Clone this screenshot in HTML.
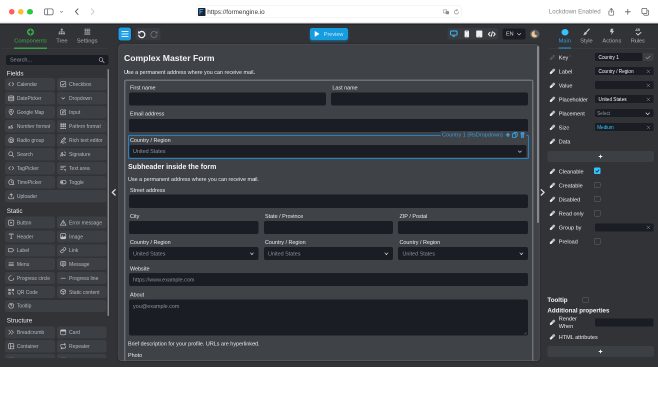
<!DOCTYPE html>
<html><head><meta charset="utf-8"><title>FormEngine</title>
<style>
html,body{margin:0;padding:0;background:#fff;}
body{width:658px;height:400px;overflow:hidden;position:relative;font-family:"Liberation Sans",sans-serif;}
#root{position:absolute;left:0;top:0;width:1316px;height:800px;overflow:hidden;will-change:transform;transform:scale(0.5);transform-origin:0 0;}
#root div,#root svg,#txt div{position:absolute;box-sizing:border-box;}
#txt{position:absolute;left:0;top:0;width:658px;height:400px;overflow:hidden;will-change:transform;}
.t{white-space:nowrap;}
svg{overflow:visible;fill:none;}
</style></head><body><div id="root">
<div style="left:0px;top:0px;width:1316px;height:48px;background:#fff;"></div>
<div style="left:0px;top:43px;width:1316px;height:5px;background:linear-gradient(to bottom,rgba(0,0,0,0),rgba(0,0,0,0.2));"></div>
<div style="left:18px;top:18px;width:11px;height:11px;border-radius:50%;background:#fe5f57;"></div>
<div style="left:36px;top:18px;width:11px;height:11px;border-radius:50%;background:#febc2e;"></div>
<div style="left:54px;top:18px;width:12px;height:11px;border-radius:50%;background:#28c840;"></div>
<svg style="left:88.4px;top:16.6px;width:19px;height:13.4px;" viewBox="0 0 9.5 6.7"><rect x="0.4" y="0.4" width="8.7" height="5.9" rx="1.4" stroke="#6e6e73" stroke-width="0.8"/><line x1="3.5" y1="0.4" x2="3.5" y2="6.3" stroke="#6e6e73" stroke-width="0.8"/></svg>
<svg style="left:119.6px;top:22px;width:6px;height:3.6px;" viewBox="0 0 3 1.8"><path d="M0.2 0.2 L1.5 1.5 L2.8 0.2" stroke="#8e8e93" stroke-width="0.7" stroke-linecap="round" stroke-linejoin="round"/></svg>
<svg style="left:150px;top:17px;width:6.8px;height:12.4px;" viewBox="0 0 3.4 6.2"><path d="M3 0.3 L0.4 3.1 L3 5.9" stroke="#545458" stroke-width="0.9" stroke-linecap="round" stroke-linejoin="round"/></svg>
<svg style="left:182.2px;top:17px;width:6.8px;height:12.4px;" viewBox="0 0 3.4 6.2"><path d="M0.4 0.3 L3 3.1 L0.4 5.9" stroke="#c7c7cb" stroke-width="0.9" stroke-linecap="round" stroke-linejoin="round"/></svg>
<div style="left:392px;top:10px;width:531px;height:26px;border-radius:7px;border:1.2px solid #ececee;background:#fff;"></div>
<div style="left:396px;top:16px;width:15px;height:16px;background:#1c2230;border-radius:1.6px;"></div>
<svg style="left:399.3px;top:18.4px;width:8px;height:10.8px;" viewBox="0 0 4 5.4"><path d="M0.4 5.2 V0.5 H3.7 M0.4 2.7 H3" stroke="#3aa0f0" stroke-width="1"/></svg>
<div class="t" style="left:414.4px;top:15.72px;height:17.78px;line-height:17.78px;font-size:12.7px;color:#38383a;font-weight:400;">https://formengine.io</div>
<svg style="left:886.2px;top:18.6px;width:12.8px;height:10px;" viewBox="0 0 6.4 5"><rect x="0.3" y="0.3" width="3.6" height="3.2" rx="0.8" stroke="#8e8e93" stroke-width="0.6"/><rect x="2.6" y="1.6" width="3.5" height="3.1" rx="0.8" fill="#8e8e93"/></svg>
<svg style="left:907.6px;top:18.4px;width:10px;height:10.8px;" viewBox="0 0 5 5.4"><path d="M4.4 3.1 A2 2 0 1 1 2.5 1.1 H3.3" stroke="#8e8e93" stroke-width="0.65" stroke-linecap="round"/><path d="M2.7 0.2 L3.6 1.1 L2.7 2" stroke="#8e8e93" stroke-width="0.6" stroke-linecap="round" stroke-linejoin="round"/></svg>
<div class="t" style="left:1097.8px;top:15.44px;height:17.14px;line-height:17.14px;font-size:12.24px;color:#8a8a8e;font-weight:400;">Lockdown Enabled</div>
<svg style="left:1217px;top:15.6px;width:11.2px;height:15.2px;" viewBox="0 0 5.6 7.6"><path d="M1.6 2.9 H1.2 Q0.4 2.9 0.4 3.7 V6.4 Q0.4 7.2 1.2 7.2 H4.4 Q5.2 7.2 5.2 6.4 V3.7 Q5.2 2.9 4.4 2.9 H4" stroke="#606065" stroke-width="0.7" stroke-linecap="round"/><path d="M2.8 4.6 V0.5 M1.6 1.6 L2.8 0.4 L4 1.6" stroke="#606065" stroke-width="0.7" stroke-linecap="round" stroke-linejoin="round"/></svg>
<svg style="left:1249.8px;top:18px;width:11.2px;height:11.2px;" viewBox="0 0 5.6 5.6"><path d="M2.8 0.3 V5.3 M0.3 2.8 H5.3" stroke="#606065" stroke-width="0.8" stroke-linecap="round"/></svg>
<svg style="left:1282.8px;top:16px;width:15.2px;height:15.2px;" viewBox="0 0 7.6 7.6"><rect x="0.4" y="0.4" width="5" height="5.2" rx="1.1" stroke="#606065" stroke-width="0.75"/><path d="M6.3 2.2 Q7.2 2.3 7.2 3.3 V6 Q7.2 7.2 6 7.2 H3.3 Q2.3 7.2 2.2 6.4" stroke="#606065" stroke-width="0.75" stroke-linecap="round"/></svg>
<div style="left:0px;top:47px;width:1316px;height:687px;background:#313337;"></div>
<div style="left:0px;top:47px;width:1316px;height:2px;background:#1b1c1f;"></div>
<svg style="left:54.2px;top:56.8px;width:14px;height:14px;" viewBox="0 0 16 16"><circle cx="8" cy="8" r="8" fill="#33b145"/><path d="M8 3.8 V12.2 M4.6 8 H11.4" stroke="#313337" stroke-width="3.2" stroke-linecap="round"/></svg>
<div class="t" style="left:28.4px;top:72.54px;height:16.12px;line-height:16.12px;font-size:11.52px;color:#3fab49;font-weight:400;">Components</div>
<svg style="left:117.4px;top:57px;width:13.2px;height:12.4px;" viewBox="0 0 16 15"><rect x="5.6" y="0.5" width="4.8" height="4.2" fill="#a7abb2"/><rect x="0.4" y="9.8" width="4.4" height="4.4" fill="#a7abb2"/><rect x="5.8" y="9.8" width="4.4" height="4.4" fill="#a7abb2"/><rect x="11.2" y="9.8" width="4.4" height="4.4" fill="#a7abb2"/><path d="M8 4.5 V9.8 M2.6 9.8 V7.2 H13.4 V9.8" stroke="#a7abb2" stroke-width="1.3"/></svg>
<div class="t" style="left:112.6px;top:72.54px;height:16.12px;line-height:16.12px;font-size:11.52px;color:#a7abb2;font-weight:400;letter-spacing:-0.24px;">Tree</div>
<svg style="left:167.8px;top:56.8px;width:13.2px;height:12.8px;" viewBox="0 0 16 16"><path d="M0.5 1.5 H15.5 M0.5 5.2 H15.5 M0.5 9 H15.5 M0.5 14.4 H15.5" stroke="#a7abb2" stroke-width="1.6"/><path d="M3.5 1.5 V9 M8 1.5 V9 M12.5 1.5 V9" stroke="#a7abb2" stroke-width="1.3"/><rect x="1" y="10.6" width="14" height="2.6" fill="#a7abb2" opacity="0.7"/></svg>
<div class="t" style="left:153.4px;top:72.54px;height:16.12px;line-height:16.12px;font-size:11.52px;color:#a7abb2;font-weight:400;">Settings</div>
<div style="left:5px;top:97px;width:212px;height:1px;background:#3f4247;"></div>
<div style="left:28px;top:95px;width:66px;height:3px;background:#3da046;"></div>
<div style="left:12px;top:110px;width:205px;height:20px;background:#1a1d24;border-radius:4.4px;"></div>
<div class="t" style="left:20px;top:111.9px;height:15.4px;line-height:15.4px;font-size:11px;color:#9499a1;font-weight:400;">Search...</div>
<svg style="left:197px;top:114.4px;width:12px;height:12px;" viewBox="0 0 16 16"><circle cx="6.6" cy="6.6" r="4.9" stroke="#cdd0d4" stroke-width="1.5"/><path d="M10.4 10.4 L15 15" stroke="#cdd0d4" stroke-width="1.7" stroke-linecap="round"/></svg>
<div style="left:215px;top:138px;width:3px;height:494px;background:#85888d;border-radius:1.6px;"></div>
<div style="left:0;top:132px;width:220px;height:584px;overflow:hidden;"><div style="left:0;top:-132px;width:220px;height:800px;">
<div class="t" style="left:13.5px;top:138.98px;height:17.64px;line-height:17.64px;font-size:12.6px;color:#e9ebf0;font-weight:400;">Fields</div>
<div style="left:10px;top:156px;width:100px;height:25px;background:#3c3f43;border-radius:4.8px;"></div>
<svg style="left:15.6px;top:162px;width:12.8px;height:12.8px;" viewBox="0 0 16 16"><path d="M5.5 4 L1.5 8 L5.5 12 M10.5 4 L14.5 8 L10.5 12" stroke="#c3c6ca" stroke-width="1.6" stroke-linecap="round" stroke-linejoin="round"/></svg>
<div class="t" style="left:33.7px;top:162.36px;height:14.08px;line-height:14.08px;font-size:10.06px;color:#b6b9be;font-weight:400;">Calendar</div>
<div style="left:114px;top:156px;width:99px;height:25px;background:#3c3f43;border-radius:4.8px;"></div>
<svg style="left:120px;top:162px;width:12.8px;height:12.8px;" viewBox="0 0 16 16"><rect x="1.5" y="1.5" width="13" height="13" rx="2.5" stroke="#c3c6ca" stroke-width="1.6" stroke-linecap="round" stroke-linejoin="round"/><path d="M4.8 8.4 L7 10.6 L11.4 5.6" stroke="#c3c6ca" stroke-width="1.6" stroke-linecap="round" stroke-linejoin="round"/></svg>
<div class="t" style="left:138.1px;top:162.36px;height:14.08px;line-height:14.08px;font-size:10.06px;color:#b6b9be;font-weight:400;">Checkbox</div>
<div style="left:10px;top:184px;width:100px;height:25px;background:#3c3f43;border-radius:4.8px;"></div>
<svg style="left:15.6px;top:190px;width:12.8px;height:12.8px;" viewBox="0 0 16 16"><rect x="1.5" y="2.5" width="13" height="12" rx="2.5" stroke="#c3c6ca" stroke-width="1.6" stroke-linecap="round" stroke-linejoin="round"/><path d="M1.5 6.5 H14.5 M1.5 10 H14.5" stroke="#c3c6ca" stroke-width="1.6" stroke-linecap="round" stroke-linejoin="round"/></svg>
<div class="t" style="left:33.7px;top:190.36px;height:14.08px;line-height:14.08px;font-size:10.06px;color:#b6b9be;font-weight:400;">DatePicker</div>
<div style="left:114px;top:184px;width:99px;height:25px;background:#3c3f43;border-radius:4.8px;"></div>
<svg style="left:120px;top:190px;width:12.8px;height:12.8px;" viewBox="0 0 16 16"><path d="M4.5 6.5 L8 10 L11.5 6.5" stroke="#c3c6ca" stroke-width="1.6" stroke-linecap="round" stroke-linejoin="round"/></svg>
<div class="t" style="left:138.1px;top:190.36px;height:14.08px;line-height:14.08px;font-size:10.06px;color:#b6b9be;font-weight:400;">Dropdown</div>
<div style="left:10px;top:212px;width:100px;height:25px;background:#3c3f43;border-radius:4.8px;"></div>
<svg style="left:15.6px;top:218px;width:12.8px;height:12.8px;" viewBox="0 0 16 16"><path d="M8 15 C4 10.5 2.5 8.5 2.5 6.3 A5.5 5.5 0 0 1 13.5 6.3 C13.5 8.5 12 10.5 8 15 Z" stroke="#c3c6ca" stroke-width="1.6" stroke-linecap="round" stroke-linejoin="round"/><circle cx="8" cy="6.3" r="1.8" stroke="#c3c6ca" stroke-width="1.6" stroke-linecap="round" stroke-linejoin="round"/></svg>
<div class="t" style="left:33.7px;top:218.36px;height:14.08px;line-height:14.08px;font-size:10.06px;color:#b6b9be;font-weight:400;">Google Map</div>
<div style="left:114px;top:212px;width:99px;height:25px;background:#3c3f43;border-radius:4.8px;"></div>
<svg style="left:120px;top:218px;width:12.8px;height:12.8px;" viewBox="0 0 16 16"><path d="M8 2 H4 Q1.5 2 1.5 4.5 V12 Q1.5 14.5 4 14.5 H11.5 Q14 14.5 14 12 V8.5" stroke="#c3c6ca" stroke-width="1.6" stroke-linecap="round" stroke-linejoin="round"/><path d="M12.2 1.4 L14.6 3.8 L8.2 10.2 L5.4 10.6 L5.8 7.8 Z" stroke="#c3c6ca" stroke-width="1.6" stroke-linecap="round" stroke-linejoin="round"/></svg>
<div class="t" style="left:138.1px;top:218.36px;height:14.08px;line-height:14.08px;font-size:10.06px;color:#b6b9be;font-weight:400;">Input</div>
<div style="left:10px;top:240px;width:100px;height:25px;background:#3c3f43;border-radius:4.8px;"></div>
<svg style="left:15.6px;top:246px;width:12.8px;height:12.8px;" viewBox="0 0 16 16"><text x="0" y="13.5" font-size="11.5" font-weight="700" font-family="Liberation Sans" fill="#c3c6ca">a5</text></svg>
<div class="t" style="left:33.7px;top:246.36px;height:14.08px;line-height:14.08px;font-size:10.06px;color:#b6b9be;font-weight:400;">Number format</div>
<div style="left:114px;top:240px;width:99px;height:25px;background:#3c3f43;border-radius:4.8px;"></div>
<svg style="left:120px;top:246px;width:12.8px;height:12.8px;" viewBox="0 0 16 16"><rect x="1" y="1" width="3.8" height="3.8" fill="#c3c6ca"/><rect x="1" y="6" width="3.8" height="3.8" fill="#c3c6ca"/><rect x="1" y="11" width="3.8" height="3.8" fill="#c3c6ca"/><rect x="6" y="1" width="3.8" height="3.8" fill="#c3c6ca"/><rect x="6" y="6" width="3.8" height="3.8" fill="#c3c6ca"/><rect x="6" y="11" width="3.8" height="3.8" fill="#c3c6ca"/><rect x="11" y="1" width="3.8" height="3.8" fill="#c3c6ca"/><rect x="11" y="6" width="3.8" height="3.8" fill="#c3c6ca"/><rect x="11" y="11" width="3.8" height="3.8" fill="#c3c6ca"/></svg>
<div class="t" style="left:138.1px;top:246.36px;height:14.08px;line-height:14.08px;font-size:10.06px;color:#b6b9be;font-weight:400;">Pattern format</div>
<div style="left:10px;top:268px;width:100px;height:25px;background:#3c3f43;border-radius:4.8px;"></div>
<svg style="left:15.6px;top:274px;width:12.8px;height:12.8px;" viewBox="0 0 16 16"><circle cx="8" cy="8" r="6.3" stroke="#c3c6ca" stroke-width="1.6" stroke-linecap="round" stroke-linejoin="round"/><circle cx="8" cy="8" r="2.8" stroke="#c3c6ca" stroke-width="1.6" stroke-linecap="round" stroke-linejoin="round"/></svg>
<div class="t" style="left:33.7px;top:274.36px;height:14.08px;line-height:14.08px;font-size:10.06px;color:#b6b9be;font-weight:400;">Radio group</div>
<div style="left:114px;top:268px;width:99px;height:25px;background:#3c3f43;border-radius:4.8px;"></div>
<svg style="left:120px;top:274px;width:12.8px;height:12.8px;" viewBox="0 0 16 16"><path d="M11 1.5 L14 4.5 L7 11.5 L3.8 12 L4.3 8.8 Z" stroke="#c3c6ca" stroke-width="1.6" stroke-linecap="round" stroke-linejoin="round"/><path d="M1.5 14.8 Q4 13 6 14.6 T10.5 14.4" stroke="#c3c6ca" stroke-width="1.6" stroke-linecap="round" stroke-linejoin="round"/><path d="M12 12 L14.5 14.8" stroke="#c3c6ca" stroke-width="1.6" stroke-linecap="round" stroke-linejoin="round"/></svg>
<div class="t" style="left:138.1px;top:274.36px;height:14.08px;line-height:14.08px;font-size:10.06px;color:#b6b9be;font-weight:400;">Rich text editor</div>
<div style="left:10px;top:296px;width:100px;height:25px;background:#3c3f43;border-radius:4.8px;"></div>
<svg style="left:15.6px;top:302px;width:12.8px;height:12.8px;" viewBox="0 0 16 16"><circle cx="6.8" cy="6.8" r="4.9" stroke="#c3c6ca" stroke-width="1.6" stroke-linecap="round" stroke-linejoin="round"/><path d="M10.6 10.6 L14.8 14.8" stroke="#c3c6ca" stroke-width="1.6" stroke-linecap="round" stroke-linejoin="round"/></svg>
<div class="t" style="left:33.7px;top:302.36px;height:14.08px;line-height:14.08px;font-size:10.06px;color:#b6b9be;font-weight:400;">Search</div>
<div style="left:114px;top:296px;width:99px;height:25px;background:#3c3f43;border-radius:4.8px;"></div>
<svg style="left:120px;top:302px;width:12.8px;height:12.8px;" viewBox="0 0 16 16"><path d="M1.5 13 C3 6 5.5 2 6.5 4 C7.5 6.5 3 12.5 5.5 12.5 C7.5 12.5 8.5 8 10 8.5 C11 9 10 11.5 11.5 11.5 L14.5 9.5" stroke="#c3c6ca" stroke-width="1.6" stroke-linecap="round" stroke-linejoin="round"/><path d="M11 2 L14 5" stroke="#c3c6ca" stroke-width="1.6" stroke-linecap="round" stroke-linejoin="round"/></svg>
<div class="t" style="left:138.1px;top:302.36px;height:14.08px;line-height:14.08px;font-size:10.06px;color:#b6b9be;font-weight:400;">Signature</div>
<div style="left:10px;top:324px;width:100px;height:25px;background:#3c3f43;border-radius:4.8px;"></div>
<svg style="left:15.6px;top:330px;width:12.8px;height:12.8px;" viewBox="0 0 16 16"><path d="M5.5 4 L1.5 8 L5.5 12 M10.5 4 L14.5 8 L10.5 12" stroke="#c3c6ca" stroke-width="1.6" stroke-linecap="round" stroke-linejoin="round"/></svg>
<div class="t" style="left:33.7px;top:330.36px;height:14.08px;line-height:14.08px;font-size:10.06px;color:#b6b9be;font-weight:400;">TagPicker</div>
<div style="left:114px;top:324px;width:99px;height:25px;background:#3c3f43;border-radius:4.8px;"></div>
<svg style="left:120px;top:330px;width:12.8px;height:12.8px;" viewBox="0 0 16 16"><path d="M1.5 3 H14.5 M1.5 7 H10 M1.5 11 H6.5" stroke="#c3c6ca" stroke-width="1.6" stroke-linecap="round" stroke-linejoin="round"/><path d="M10.5 11.5 H14.5 M12.5 14.5 H14.5" stroke="#c3c6ca" stroke-width="1.6" stroke-linecap="round" stroke-linejoin="round"/></svg>
<div class="t" style="left:138.1px;top:330.36px;height:14.08px;line-height:14.08px;font-size:10.06px;color:#b6b9be;font-weight:400;">Text area</div>
<div style="left:10px;top:352px;width:100px;height:25px;background:#3c3f43;border-radius:4.8px;"></div>
<svg style="left:15.6px;top:358px;width:12.8px;height:12.8px;" viewBox="0 0 16 16"><circle cx="8" cy="8" r="6.3" stroke="#c3c6ca" stroke-width="1.6" stroke-linecap="round" stroke-linejoin="round"/><path d="M8 4.2 V8 H11.2" stroke="#c3c6ca" stroke-width="1.6" stroke-linecap="round" stroke-linejoin="round"/><path d="M11.5 12.5 L15 14.5" stroke="#c3c6ca" stroke-width="1.6" stroke-linecap="round" stroke-linejoin="round"/></svg>
<div class="t" style="left:33.7px;top:358.36px;height:14.08px;line-height:14.08px;font-size:10.06px;color:#b6b9be;font-weight:400;">TimePicker</div>
<div style="left:114px;top:352px;width:99px;height:25px;background:#3c3f43;border-radius:4.8px;"></div>
<svg style="left:120px;top:358px;width:12.8px;height:12.8px;" viewBox="0 0 16 16"><rect x="0.8" y="3.8" width="14.4" height="8.4" rx="4.2" stroke="#c3c6ca" stroke-width="1.6" stroke-linecap="round" stroke-linejoin="round"/><circle cx="5.2" cy="8" r="2.6" fill="#c3c6ca"/></svg>
<div class="t" style="left:138.1px;top:358.36px;height:14.08px;line-height:14.08px;font-size:10.06px;color:#b6b9be;font-weight:400;">Toggle</div>
<div style="left:10px;top:380px;width:203px;height:25px;background:#3c3f43;border-radius:4.8px;"></div>
<svg style="left:15.6px;top:386px;width:12.8px;height:12.8px;" viewBox="0 0 16 16"><path d="M1.5 9.5 V12 Q1.5 14.5 4 14.5 H12 Q14.5 14.5 14.5 12 V9.5" stroke="#c3c6ca" stroke-width="1.6" stroke-linecap="round" stroke-linejoin="round"/><path d="M8 10.5 V2 M4.8 5 L8 1.8 L11.2 5" stroke="#c3c6ca" stroke-width="1.6" stroke-linecap="round" stroke-linejoin="round"/></svg>
<div class="t" style="left:33.7px;top:386.36px;height:14.08px;line-height:14.08px;font-size:10.06px;color:#b6b9be;font-weight:400;">Uploader</div>
<div class="t" style="left:13.5px;top:413.58px;height:17.64px;line-height:17.64px;font-size:12.6px;color:#e9ebf0;font-weight:400;">Static</div>
<div style="left:10px;top:433px;width:100px;height:24px;background:#3c3f43;border-radius:4.8px;"></div>
<svg style="left:15.6px;top:438.5px;width:12.8px;height:12.8px;" viewBox="0 0 16 16"><rect x="1.5" y="1.5" width="13" height="13" rx="3" stroke="#c3c6ca" stroke-width="1.6" stroke-linecap="round" stroke-linejoin="round"/><path d="M6.2 5 L10.8 8 L6.2 11 Z" fill="#c3c6ca"/></svg>
<div class="t" style="left:33.7px;top:438.86px;height:14.08px;line-height:14.08px;font-size:10.06px;color:#b6b9be;font-weight:400;">Button</div>
<div style="left:114px;top:433px;width:99px;height:24px;background:#3c3f43;border-radius:4.8px;"></div>
<svg style="left:120px;top:438.5px;width:12.8px;height:12.8px;" viewBox="0 0 16 16"><path d="M8 1.8 L15 14.2 H1 Z" stroke="#c3c6ca" stroke-width="1.6" stroke-linecap="round" stroke-linejoin="round"/><path d="M8 6.5 V10" stroke="#c3c6ca" stroke-width="1.6" stroke-linecap="round" stroke-linejoin="round"/><circle cx="8" cy="12" r="0.6" fill="#c3c6ca"/></svg>
<div class="t" style="left:138.1px;top:438.86px;height:14.08px;line-height:14.08px;font-size:10.06px;color:#b6b9be;font-weight:400;">Error message</div>
<div style="left:10px;top:461px;width:100px;height:24px;background:#3c3f43;border-radius:4.8px;"></div>
<svg style="left:15.6px;top:466.26px;width:12.8px;height:12.8px;" viewBox="0 0 16 16"><path d="M3 3.8 V2.5 H13 V3.8 M8 2.5 V13.5 M6 13.5 H10" stroke="#c3c6ca" stroke-width="1.6" stroke-linecap="round" stroke-linejoin="round"/></svg>
<div class="t" style="left:33.7px;top:466.62px;height:14.08px;line-height:14.08px;font-size:10.06px;color:#b6b9be;font-weight:400;">Header</div>
<div style="left:114px;top:461px;width:99px;height:24px;background:#3c3f43;border-radius:4.8px;"></div>
<svg style="left:120px;top:466.26px;width:12.8px;height:12.8px;" viewBox="0 0 16 16"><rect x="1.5" y="1.5" width="13" height="13" rx="2.2" stroke="#c3c6ca" stroke-width="1.6" stroke-linecap="round" stroke-linejoin="round"/><circle cx="5.6" cy="5.6" r="1.3" fill="#c3c6ca"/><path d="M1.8 12 L5.8 8.8 L8.4 10.8 L11 8.4 L14.2 11.4" stroke="#c3c6ca" stroke-width="1.6" stroke-linecap="round" stroke-linejoin="round"/><path d="M2.2 14 H13.8 V11.8 L11 9 L8.4 11.2 L5.8 9.4 L2.2 12.4 Z" fill="#c3c6ca"/></svg>
<div class="t" style="left:138.1px;top:466.62px;height:14.08px;line-height:14.08px;font-size:10.06px;color:#b6b9be;font-weight:400;">Image</div>
<div style="left:10px;top:489px;width:100px;height:24px;background:#3c3f43;border-radius:4.8px;"></div>
<svg style="left:15.6px;top:494.02px;width:12.8px;height:12.8px;" viewBox="0 0 16 16"><path d="M1.5 4 H10.5 L14.5 8 L10.5 12 H1.5 Z" stroke="#c3c6ca" stroke-width="1.6" stroke-linecap="round" stroke-linejoin="round"/></svg>
<div class="t" style="left:33.7px;top:494.38px;height:14.08px;line-height:14.08px;font-size:10.06px;color:#b6b9be;font-weight:400;">Label</div>
<div style="left:114px;top:489px;width:99px;height:24px;background:#3c3f43;border-radius:4.8px;"></div>
<svg style="left:120px;top:494.02px;width:12.8px;height:12.8px;" viewBox="0 0 16 16"><path d="M7 9 A3 3 0 0 0 11.3 9 L13.6 6.7 A3 3 0 0 0 9.3 2.4 L8.2 3.5" stroke="#c3c6ca" stroke-width="1.6" stroke-linecap="round" stroke-linejoin="round"/><path d="M9 7 A3 3 0 0 0 4.7 7 L2.4 9.3 A3 3 0 0 0 6.7 13.6 L7.8 12.5" stroke="#c3c6ca" stroke-width="1.6" stroke-linecap="round" stroke-linejoin="round"/></svg>
<div class="t" style="left:138.1px;top:494.38px;height:14.08px;line-height:14.08px;font-size:10.06px;color:#b6b9be;font-weight:400;">Link</div>
<div style="left:10px;top:516px;width:100px;height:24px;background:#3c3f43;border-radius:4.8px;"></div>
<svg style="left:15.6px;top:521.78px;width:12.8px;height:12.8px;" viewBox="0 0 16 16"><path d="M2 4.5 H14 M2 8 H14 M2 11.5 H14" stroke="#c3c6ca" stroke-width="1.6" stroke-linecap="round" stroke-linejoin="round"/></svg>
<div class="t" style="left:33.7px;top:522.14px;height:14.08px;line-height:14.08px;font-size:10.06px;color:#b6b9be;font-weight:400;">Menu</div>
<div style="left:114px;top:516px;width:99px;height:24px;background:#3c3f43;border-radius:4.8px;"></div>
<svg style="left:120px;top:521.78px;width:12.8px;height:12.8px;" viewBox="0 0 16 16"><path d="M3.5 1.8 H12.5 Q14.5 1.8 14.5 3.8 V9.4 Q14.5 11.4 12.5 11.4 H9.5 L8 14 L6.5 11.4 H3.5 Q1.5 11.4 1.5 9.4 V3.8 Q1.5 1.8 3.5 1.8 Z" stroke="#c3c6ca" stroke-width="1.6" stroke-linecap="round" stroke-linejoin="round"/><path d="M4.6 5 H11.4 M4.6 8 H11.4" stroke="#c3c6ca" stroke-width="1.6" stroke-linecap="round" stroke-linejoin="round"/></svg>
<div class="t" style="left:138.1px;top:522.14px;height:14.08px;line-height:14.08px;font-size:10.06px;color:#b6b9be;font-weight:400;">Message</div>
<div style="left:10px;top:544px;width:100px;height:24px;background:#3c3f43;border-radius:4.8px;"></div>
<svg style="left:15.6px;top:549.54px;width:12.8px;height:12.8px;" viewBox="0 0 16 16"><path d="M8 1.8 A6.2 6.2 0 1 0 14.2 8" stroke="#c3c6ca" stroke-width="1.6" stroke-linecap="round" stroke-linejoin="round"/></svg>
<div class="t" style="left:33.7px;top:549.9px;height:14.08px;line-height:14.08px;font-size:10.06px;color:#b6b9be;font-weight:400;">Progress circle</div>
<div style="left:114px;top:544px;width:99px;height:24px;background:#3c3f43;border-radius:4.8px;"></div>
<svg style="left:120px;top:549.54px;width:12.8px;height:12.8px;" viewBox="0 0 16 16"><path d="M2.5 8 H13.5" stroke="#c3c6ca" stroke-width="1.6" stroke-linecap="round" stroke-linejoin="round"/></svg>
<div class="t" style="left:138.1px;top:549.9px;height:14.08px;line-height:14.08px;font-size:10.06px;color:#b6b9be;font-weight:400;">Progress line</div>
<div style="left:10px;top:572px;width:100px;height:24px;background:#3c3f43;border-radius:4.8px;"></div>
<svg style="left:15.6px;top:577.3px;width:12.8px;height:12.8px;" viewBox="0 0 16 16"><rect x="1" y="1" width="5.5" height="5.5" fill="#c3c6ca"/><rect x="9.5" y="1" width="5.5" height="5.5" fill="#c3c6ca"/><rect x="1" y="9.5" width="5.5" height="5.5" fill="#c3c6ca"/><rect x="9.5" y="9.5" width="2.4" height="2.4" fill="#c3c6ca"/><rect x="12.6" y="12.6" width="2.4" height="2.4" fill="#c3c6ca"/><rect x="2.8" y="2.8" width="1.9" height="1.9" fill="#3c3f43"/><rect x="11.3" y="2.8" width="1.9" height="1.9" fill="#3c3f43"/><rect x="2.8" y="11.3" width="1.9" height="1.9" fill="#3c3f43"/></svg>
<div class="t" style="left:33.7px;top:577.66px;height:14.08px;line-height:14.08px;font-size:10.06px;color:#b6b9be;font-weight:400;">QR Code</div>
<div style="left:114px;top:572px;width:99px;height:24px;background:#3c3f43;border-radius:4.8px;"></div>
<svg style="left:120px;top:577.3px;width:12.8px;height:12.8px;" viewBox="0 0 16 16"><path d="M8 1.5 L14 4.8 V11.2 L8 14.5 L2 11.2 V4.8 Z" stroke="#c3c6ca" stroke-width="1.6" stroke-linecap="round" stroke-linejoin="round"/><path d="M2.2 5 L8 8.2 L13.8 5 M8 8.2 V14.3" stroke="#c3c6ca" stroke-width="1.6" stroke-linecap="round" stroke-linejoin="round"/></svg>
<div class="t" style="left:138.1px;top:577.66px;height:14.08px;line-height:14.08px;font-size:10.06px;color:#b6b9be;font-weight:400;">Static content</div>
<div style="left:10px;top:600px;width:203px;height:24px;background:#3c3f43;border-radius:4.8px;"></div>
<svg style="left:15.6px;top:605.06px;width:12.8px;height:12.8px;" viewBox="0 0 16 16"><circle cx="8" cy="8" r="6.3" stroke="#c3c6ca" stroke-width="1.6" stroke-linecap="round" stroke-linejoin="round"/><path d="M6 6.3 Q6 4.4 8 4.4 Q10 4.4 10 6.2 Q10 7.4 8 8.2 V9" stroke="#c3c6ca" stroke-width="1.6" stroke-linecap="round" stroke-linejoin="round"/><circle cx="8" cy="11.4" r="0.6" fill="#c3c6ca"/></svg>
<div class="t" style="left:33.7px;top:605.42px;height:14.08px;line-height:14.08px;font-size:10.06px;color:#b6b9be;font-weight:400;">Tooltip</div>
<div class="t" style="left:13.5px;top:633.38px;height:17.64px;line-height:17.64px;font-size:12.6px;color:#e9ebf0;font-weight:400;">Structure</div>
<div style="left:10px;top:653px;width:100px;height:24px;background:#3c3f43;border-radius:4.8px;"></div>
<svg style="left:15.6px;top:658.1px;width:12.8px;height:12.8px;" viewBox="0 0 16 16"><path d="M2 3 L7 8 L2 13 M8.5 3 L13.5 8 L8.5 13" stroke="#c3c6ca" stroke-width="1.6" stroke-linecap="round" stroke-linejoin="round"/></svg>
<div class="t" style="left:33.7px;top:658.46px;height:14.08px;line-height:14.08px;font-size:10.06px;color:#b6b9be;font-weight:400;">Breadcrumb</div>
<div style="left:114px;top:653px;width:99px;height:24px;background:#3c3f43;border-radius:4.8px;"></div>
<svg style="left:120px;top:658.1px;width:12.8px;height:12.8px;" viewBox="0 0 16 16"><rect x="1.5" y="2" width="13" height="12.5" rx="2.2" stroke="#c3c6ca" stroke-width="1.6" stroke-linecap="round" stroke-linejoin="round"/><path d="M1.5 5.4 H14.5" stroke="#c3c6ca" stroke-width="1.6" stroke-linecap="round" stroke-linejoin="round"/><rect x="1.5" y="2" width="13" height="3.4" fill="#c3c6ca"/></svg>
<div class="t" style="left:138.1px;top:658.46px;height:14.08px;line-height:14.08px;font-size:10.06px;color:#b6b9be;font-weight:400;">Card</div>
<div style="left:10px;top:680px;width:100px;height:25px;background:#3c3f43;border-radius:4.8px;"></div>
<svg style="left:15.6px;top:685.9px;width:12.8px;height:12.8px;" viewBox="0 0 16 16"><rect x="1.5" y="1.5" width="13" height="13" rx="2.4" stroke="#c3c6ca" stroke-width="1.6" stroke-linecap="round" stroke-linejoin="round"/><path d="M6.2 1.5 V14.5 M6.2 8 H14.5" stroke="#c3c6ca" stroke-width="1.6" stroke-linecap="round" stroke-linejoin="round"/></svg>
<div class="t" style="left:33.7px;top:686.26px;height:14.08px;line-height:14.08px;font-size:10.06px;color:#b6b9be;font-weight:400;">Container</div>
<div style="left:114px;top:680px;width:99px;height:25px;background:#3c3f43;border-radius:4.8px;"></div>
<svg style="left:120px;top:685.9px;width:12.8px;height:12.8px;" viewBox="0 0 16 16"><path d="M11 1 L13.5 3.2 L11 5.4 M13 3.2 H4.5 Q2 3.2 2 5.7 V8.5" stroke="#c3c6ca" stroke-width="1.6" stroke-linecap="round" stroke-linejoin="round"/><path d="M5 15 L2.5 12.8 L5 10.6 M3 12.8 H11.5 Q14 12.8 14 10.3 V7.5" stroke="#c3c6ca" stroke-width="1.6" stroke-linecap="round" stroke-linejoin="round"/></svg>
<div class="t" style="left:138.1px;top:686.26px;height:14.08px;line-height:14.08px;font-size:10.06px;color:#b6b9be;font-weight:400;">Repeater</div>
<div style="left:10px;top:708px;width:100px;height:24px;background:#3c3f43;border-radius:4.8px;"></div>
<svg style="left:15.6px;top:713.7px;width:12.8px;height:12.8px;" viewBox="0 0 16 16"><path d="M2 3 H14 M2 8 H14" stroke="#c3c6ca" stroke-width="1.6" stroke-linecap="round" stroke-linejoin="round"/></svg>
<div class="t" style="left:33.7px;top:714.06px;height:14.08px;line-height:14.08px;font-size:10.06px;color:#b6b9be;font-weight:400;">Slot</div>
<div style="left:114px;top:708px;width:99px;height:24px;background:#3c3f43;border-radius:4.8px;"></div>
<svg style="left:120px;top:713.7px;width:12.8px;height:12.8px;" viewBox="0 0 16 16"><path d="M2 3 H14 M2 8 H14" stroke="#c3c6ca" stroke-width="1.6" stroke-linecap="round" stroke-linejoin="round"/></svg>
<div class="t" style="left:138.1px;top:714.06px;height:14.08px;line-height:14.08px;font-size:10.06px;color:#b6b9be;font-weight:400;">Wizard</div>
</div></div>
<svg style="left:223.4px;top:378px;width:8.8px;height:13.6px;" viewBox="0 0 4.4 6.8"><path d="M3.7 0.7 L0.8 3.4 L3.7 6.1" stroke="#dcdde0" stroke-width="1.3" stroke-linecap="round" stroke-linejoin="round"/></svg>
<div style="left:237px;top:55px;width:25px;height:26px;background:#1d9fe6;border-radius:4.8px;box-shadow:0 0 3px rgba(0,0,0,.6);"></div>
<div style="left:243px;top:62px;width:14px;height:2px;background:#e3f3fc;border-radius:0.6px;"></div>
<div style="left:243px;top:67px;width:14px;height:2px;background:#e3f3fc;border-radius:0.6px;"></div>
<div style="left:243px;top:72px;width:14px;height:2px;background:#e3f3fc;border-radius:0.6px;"></div>
<div style="left:271px;top:56px;width:50px;height:24px;background:#393c41;border-radius:4.4px;"></div>
<svg style="left:275px;top:59.6px;width:16.4px;height:16.4px;" viewBox="0 0 16 16"><path d="M3.2 5.6 A6 6 0 1 1 2.4 10" stroke="#f1f2f4" stroke-width="2.5" stroke-linecap="round"/><path d="M1.2 1.6 V6.8 H6.4 Z" fill="#f1f2f4"/></svg>
<svg style="left:299.6px;top:59.6px;width:16.4px;height:16.4px;" viewBox="0 0 16 16"><path d="M12.8 5.6 A6 6 0 1 0 13.6 10" stroke="#6d7076" stroke-width="1.8" stroke-linecap="round"/><path d="M14.8 1.6 V6.8 H9.6 Z" fill="#6d7076"/></svg>
<div style="left:620px;top:56px;width:76px;height:24px;background:#169de0;border-radius:4.4px;box-shadow:0 2.4px 5px rgba(22,157,224,.45);"></div>
<svg style="left:628.8px;top:62.2px;width:10px;height:11.6px;" viewBox="0 0 4.2 5"><path d="M0.3 0.2 L4 2.5 L0.3 4.8 Z" fill="#fff" stroke="#fff" stroke-width="0.3" stroke-linejoin="round"/></svg>
<div class="t" style="left:647.6px;top:61px;height:15.4px;line-height:15.4px;font-size:11px;color:#cdebfc;font-weight:400;">Preview</div>
<div style="left:895px;top:56px;width:101px;height:23px;background:#393c41;border-radius:4.4px;"></div>
<svg style="left:900.2px;top:61.3px;width:15.2px;height:12.6px;" viewBox="0 0 7.8 6.6"><rect x="0.5" y="0.5" width="6.8" height="4.3" rx="0.8" stroke="#34c3ff" stroke-width="1"/><path d="M2.6 6.1 H5.2 M3.9 4.8 V6" stroke="#34c3ff" stroke-width="0.9"/></svg>
<svg style="left:928.8px;top:61px;width:9.2px;height:13.8px;" viewBox="0 0 4.8 7.4"><rect x="0" y="0" width="4.8" height="7.4" rx="0.9" fill="#eceef1"/><rect x="1.5" y="0.5" width="1.8" height="0.5" fill="#55585d"/><rect x="1.9" y="6.4" width="1" height="0.5" fill="#55585d"/></svg>
<svg style="left:951.9px;top:61px;width:13px;height:13.8px;" viewBox="0 0 6.6 7.4"><rect x="0" y="0" width="6.6" height="7.4" rx="0.9" fill="#eceef1"/><rect x="2.8" y="6.4" width="1" height="0.5" fill="#55585d"/></svg>
<svg style="left:976.4px;top:62.8px;width:15.2px;height:10.4px;" viewBox="0 0 7.6 5.2"><path d="M2 0.8 L0.4 2.6 L2 4.4 M5.6 0.8 L7.2 2.6 L5.6 4.4 M4.4 0.3 L3.2 4.9" stroke="#eceef1" stroke-width="1.05" stroke-linecap="round" stroke-linejoin="round"/></svg>
<div style="left:1005px;top:57px;width:46px;height:22px;background:#1a1d24;border-radius:4.4px;"></div>
<div class="t" style="left:1012px;top:60.3px;height:15.4px;line-height:15.4px;font-size:11px;color:#d3d6da;font-weight:400;">EN</div>
<svg style="left:1033.6px;top:65.8px;width:8.4px;height:4.8px;" viewBox="0 0 3.8 2.2"><path d="M0.3 0.3 L1.9 1.9 L3.5 0.3" stroke="#dfe1e5" stroke-width="0.5" stroke-linecap="round" stroke-linejoin="round"/></svg>
<div style="left:1060px;top:59px;width:19px;height:18px;background:#5b5e63;border-radius:50%;"></div>
<svg style="left:1063px;top:61.6px;width:12px;height:12.8px;" viewBox="0 0 6 6.4"><path d="M3.6 0.2 A3.1 3.1 0 1 0 5.9 4.6 A2.7 2.7 0 0 1 3.6 0.2 Z" fill="#f3c98b"/></svg>
<div style="left:237px;top:89px;width:842px;height:633px;background:#3f4247;border-radius:6px;border:1px solid #62656a;overflow:hidden;box-shadow:0 0 4px rgba(0,0,0,.4);"><div style="left:-238px;top:-90px;width:1316px;height:800px;">
<div class="t" style="left:248px;top:104.34px;height:24.14px;line-height:24.14px;font-size:17.24px;color:#f2f3f5;font-weight:700;">Complex Master Form</div>
<div class="t" style="left:248px;top:137.02px;height:15.18px;line-height:15.18px;font-size:10.84px;color:#e9ebf0;font-weight:400;">Use a permanent address where you can receive mail.</div>
<div style="left:248px;top:159px;width:819px;height:600px;border:3px solid #6c7075;border-radius:4px;"></div>
<div class="t" style="left:260px;top:168.02px;height:15.18px;line-height:15.18px;font-size:10.84px;color:#e9ebf0;font-weight:400;">First name</div>
<div style="left:258px;top:185px;width:394px;height:26px;background:#1a1d24;border-radius:4px;"></div>
<div class="t" style="left:664.8px;top:168.02px;height:15.18px;line-height:15.18px;font-size:10.84px;color:#e9ebf0;font-weight:400;">Last name</div>
<div style="left:662px;top:185px;width:394px;height:26px;background:#1a1d24;border-radius:4px;"></div>
<div class="t" style="left:260px;top:220.02px;height:15.18px;line-height:15.18px;font-size:10.84px;color:#e9ebf0;font-weight:400;">Email address</div>
<div style="left:258px;top:238px;width:798px;height:26px;background:#1a1d24;border-radius:4px;"></div>
<div style="left:256px;top:270px;width:802px;height:48px;border:2px solid #2580c4;border-radius:2.4px;"></div>
<div class="t" style="left:260px;top:273.02px;height:15.18px;line-height:15.18px;font-size:10.84px;color:#e9ebf0;font-weight:400;">Country / Region</div>
<div style="left:259px;top:290px;width:794px;height:25px;background:#1a1d24;border-radius:4px;"></div>
<div class="t" style="left:266px;top:294.82px;height:15.18px;line-height:15.18px;font-size:10.84px;color:#8d9299;font-weight:400;">United States</div>
<svg style="left:1036.4px;top:300.8px;width:7.6px;height:4.4px;" viewBox="0 0 3.8 2.2"><path d="M0.3 0.3 L1.9 1.9 L3.5 0.3" stroke="#dcdee2" stroke-width="0.6" stroke-linecap="round" stroke-linejoin="round"/></svg>
<div style="left:881px;top:262px;width:172px;height:16px;background:#3f4247;"></div>
<div class="t" style="left:884px;top:262.1px;height:15.4px;line-height:15.4px;font-size:11px;color:#3a9fe0;font-weight:400;">Country 1 (RsDropdown)</div>
<svg style="left:1010.6px;top:265.4px;width:9.2px;height:9.2px;" viewBox="0 0 4.6 4.6"><path d="M2.3 0.2 V4.4 M0.2 2.3 H4.4" stroke="#3aa5ea" stroke-width="1.05"/></svg>
<svg style="left:1023.6px;top:264px;width:11.6px;height:12px;" viewBox="0 0 5.8 6"><rect x="1.9" y="0.45" width="3.4" height="3.9" rx="0.6" stroke="#3aa5ea" stroke-width="0.8"/><rect x="0.45" y="1.7" width="3.4" height="3.9" rx="0.6" stroke="#3aa5ea" stroke-width="0.8" fill="#3f4247"/></svg>
<svg style="left:1039.6px;top:264px;width:10px;height:12px;" viewBox="0 0 5 6"><path d="M0.2 1.3 H4.8 M1.7 1.2 V0.4 H3.3 V1.2" stroke="#3aa5ea" stroke-width="0.75"/><path d="M0.8 1.8 H4.2 L3.9 5.8 H1.1 Z" fill="#3aa5ea"/><path d="M2 2.6 V5 M3 2.6 V5" stroke="#3f4247" stroke-width="0.4"/></svg>
<div class="t" style="left:256px;top:324.3px;height:19.6px;line-height:19.6px;font-size:14px;color:#f2f3f5;font-weight:700;">Subheader inside the form</div>
<div class="t" style="left:256px;top:351.02px;height:15.18px;line-height:15.18px;font-size:10.84px;color:#e9ebf0;font-weight:400;">Use a permanent address where you can receive mail.</div>
<div class="t" style="left:260px;top:372.52px;height:15.18px;line-height:15.18px;font-size:10.84px;color:#e9ebf0;font-weight:400;">Street address</div>
<div style="left:258px;top:389px;width:798px;height:27px;background:#1a1d24;border-radius:4px;"></div>
<div class="t" style="left:260px;top:425.02px;height:15.18px;line-height:15.18px;font-size:10.84px;color:#e9ebf0;font-weight:400;">City</div>
<div style="left:258px;top:442px;width:259px;height:26px;background:#1a1d24;border-radius:4px;"></div>
<div class="t" style="left:530px;top:425.02px;height:15.18px;line-height:15.18px;font-size:10.84px;color:#e9ebf0;font-weight:400;">State / Province</div>
<div style="left:528px;top:442px;width:258px;height:26px;background:#1a1d24;border-radius:4px;"></div>
<div class="t" style="left:799px;top:425.02px;height:15.18px;line-height:15.18px;font-size:10.84px;color:#e9ebf0;font-weight:400;">ZIP / Postal</div>
<div style="left:796px;top:442px;width:260px;height:26px;background:#1a1d24;border-radius:4px;"></div>
<div class="t" style="left:260px;top:477.02px;height:15.18px;line-height:15.18px;font-size:10.84px;color:#e9ebf0;font-weight:400;">Country / Region</div>
<div style="left:258px;top:494px;width:259px;height:26px;background:#1a1d24;border-radius:4px;"></div>
<div class="t" style="left:266px;top:499.52px;height:15.18px;line-height:15.18px;font-size:10.84px;color:#8d9299;font-weight:400;">United States</div>
<svg style="left:500.2px;top:505.4px;width:7.6px;height:4.4px;" viewBox="0 0 3.8 2.2"><path d="M0.3 0.3 L1.9 1.9 L3.5 0.3" stroke="#dcdee2" stroke-width="0.6" stroke-linecap="round" stroke-linejoin="round"/></svg>
<div class="t" style="left:530px;top:477.02px;height:15.18px;line-height:15.18px;font-size:10.84px;color:#e9ebf0;font-weight:400;">Country / Region</div>
<div style="left:528px;top:494px;width:258px;height:26px;background:#1a1d24;border-radius:4px;"></div>
<div class="t" style="left:536px;top:499.52px;height:15.18px;line-height:15.18px;font-size:10.84px;color:#8d9299;font-weight:400;">United States</div>
<svg style="left:769.2px;top:505.4px;width:7.6px;height:4.4px;" viewBox="0 0 3.8 2.2"><path d="M0.3 0.3 L1.9 1.9 L3.5 0.3" stroke="#dcdee2" stroke-width="0.6" stroke-linecap="round" stroke-linejoin="round"/></svg>
<div class="t" style="left:799px;top:477.02px;height:15.18px;line-height:15.18px;font-size:10.84px;color:#e9ebf0;font-weight:400;">Country / Region</div>
<div style="left:796px;top:494px;width:260px;height:26px;background:#1a1d24;border-radius:4px;"></div>
<div class="t" style="left:805px;top:499.52px;height:15.18px;line-height:15.18px;font-size:10.84px;color:#8d9299;font-weight:400;">United States</div>
<svg style="left:1038.7px;top:505.4px;width:7.6px;height:4.4px;" viewBox="0 0 3.8 2.2"><path d="M0.3 0.3 L1.9 1.9 L3.5 0.3" stroke="#dcdee2" stroke-width="0.6" stroke-linecap="round" stroke-linejoin="round"/></svg>
<div class="t" style="left:260px;top:529.52px;height:15.18px;line-height:15.18px;font-size:10.84px;color:#e9ebf0;font-weight:400;">Website</div>
<div style="left:258px;top:546px;width:798px;height:26px;background:#1a1d24;border-radius:4px;"></div>
<div class="t" style="left:266px;top:552.02px;height:15.18px;line-height:15.18px;font-size:10.84px;color:#8d9299;font-weight:400;">https://www.example.com</div>
<div class="t" style="left:260px;top:581.52px;height:15.18px;line-height:15.18px;font-size:10.84px;color:#e9ebf0;font-weight:400;">About</div>
<div style="left:258px;top:599px;width:798px;height:72px;background:#1a1d24;border-radius:4px;"></div>
<div class="t" style="left:266px;top:604.52px;height:15.18px;line-height:15.18px;font-size:10.84px;color:#8d9299;font-weight:400;">you@example.com</div>
<svg style="left:1048px;top:664.2px;width:5.2px;height:5.2px;" viewBox="0 0 2.6 2.6"><path d="M2.4 0.2 L0.2 2.4 M2.4 1.4 L1.4 2.4" stroke="#8a8d92" stroke-width="0.4"/></svg>
<div class="t" style="left:256px;top:680.02px;height:15.18px;line-height:15.18px;font-size:10.84px;color:#e9ebf0;font-weight:400;">Brief description for your profile. URLs are hyperlinked.</div>
<div class="t" style="left:256px;top:702.82px;height:15.18px;line-height:15.18px;font-size:10.84px;color:#e9ebf0;font-weight:400;">Photo</div>
</div></div>
<div style="left:1074px;top:92px;width:4px;height:354px;background:#85888d;border-radius:2px;"></div>
<svg style="left:1081.4px;top:378px;width:8.8px;height:13.6px;" viewBox="0 0 4.4 6.8"><path d="M0.7 0.7 L3.6 3.4 L0.7 6.1" stroke="#dcdde0" stroke-width="1.3" stroke-linecap="round" stroke-linejoin="round"/></svg>
<div style="left:1123px;top:58px;width:14px;height:13px;background:#34c3ff;border-radius:50%;"></div>
<div class="t" style="left:1117.2px;top:73.66px;height:15.88px;line-height:15.88px;font-size:11.34px;color:#2c9fe6;font-weight:400;">Main</div>
<div style="left:1117px;top:95px;width:25px;height:3px;background:#2497dc;"></div>
<svg style="left:1165.4px;top:57.4px;width:14.8px;height:14px;" viewBox="0 0 16 15"><path d="M14.4 1.4 L8.2 8" stroke="#c6c8cc" stroke-width="2.6" stroke-linecap="round"/><path d="M6.4 7.4 L9.4 10.2 Q8.4 14.4 1 14.2 Q3.6 12.4 3.8 10.2 Q4.2 7.6 6.4 7.4 Z" fill="#c6c8cc"/></svg>
<div class="t" style="left:1160.4px;top:73.66px;height:15.88px;line-height:15.88px;font-size:11.34px;color:#a7abb2;font-weight:400;letter-spacing:-0.08px;">Style</div>
<svg style="left:1218.8px;top:57.4px;width:10px;height:13.2px;" viewBox="0 0 10 14"><path d="M2.6 0.4 H8 L6.2 5 H9.6 L3.2 13.8 L4.4 7.6 H0.8 Z" fill="#c6c8cc"/></svg>
<div class="t" style="left:1204.8px;top:73.66px;height:15.88px;line-height:15.88px;font-size:11.34px;color:#a7abb2;font-weight:400;letter-spacing:0.12px;">Actions</div>
<div class="t" style="left:1270px;top:56.4px;height:8px;line-height:8px;font-size:7px;font-weight:700;color:#c6c8cc;letter-spacing:-0.1px;">AB</div>
<svg style="left:1272.4px;top:63.6px;width:10.8px;height:7.2px;" viewBox="0 0 5.4 3.6"><path d="M0.5 1.5 L2.1 3 L4.9 0.5" stroke="#c6c8cc" stroke-width="1.1" stroke-linecap="round" stroke-linejoin="round"/></svg>
<div class="t" style="left:1261.6px;top:73.66px;height:15.88px;line-height:15.88px;font-size:11.34px;color:#a7abb2;font-weight:400;letter-spacing:-0.2px;">Rules</div>
<div style="left:1098px;top:97px;width:214px;height:1px;background:#3f4247;"></div>
<svg style="left:1098.8px;top:109.2px;width:11.6px;height:11.6px;" viewBox="0 0 16 16"><path d="M3.6 12.4 L9.4 6.6" stroke="#54575d" stroke-width="6" stroke-linecap="round"/><path d="M9.8 6.2 L12 4" stroke="#4a4d53" stroke-width="7" stroke-linecap="round"/></svg>
<div class="t" style="left:1117.6px;top:108.1px;height:15.4px;line-height:15.4px;font-size:11px;color:#e9ebf0;font-weight:400;">Key</div>
<div style="left:1140px;top:111px;width:2px;height:2px;background:#f04f43;border-radius:50%;"></div>
<div style="left:1190px;top:106px;width:95px;height:16px;background:#1a1d24;border-radius:3.2px;"></div>
<div style="left:1285px;top:106px;width:22px;height:16px;background:#3c3f43;border-radius:0 3.2px 3.2px 0;"></div>
<svg style="left:1291.4px;top:110.6px;width:10.4px;height:7.6px;" viewBox="0 0 4 3"><path d="M0.4 1.5 L1.5 2.6 L3.6 0.4" stroke="#9a9da3" stroke-width="0.5" stroke-linecap="round" stroke-linejoin="round"/></svg>
<svg style="left:1098.8px;top:137.2px;width:11.6px;height:11.6px;" viewBox="0 0 16 16"><path d="M3.6 12.4 L9.4 6.6" stroke="#eceef1" stroke-width="6" stroke-linecap="round"/><path d="M9.8 6.2 L12 4" stroke="#b9bcc1" stroke-width="7" stroke-linecap="round"/></svg>
<div class="t" style="left:1117.6px;top:136.1px;height:15.4px;line-height:15.4px;font-size:11px;color:#e9ebf0;font-weight:400;">Label</div>
<div style="left:1190px;top:134px;width:117px;height:16px;background:#1a1d24;border-radius:3.2px;"></div>
<svg style="left:1293.4px;top:139px;width:7.6px;height:7.6px;" viewBox="0 0 2.9 2.9"><path d="M0.3 0.3 L2.6 2.6 M2.6 0.3 L0.3 2.6" stroke="#979aa0" stroke-width="0.36" stroke-linecap="round"/></svg>
<svg style="left:1098.8px;top:165.2px;width:11.6px;height:11.6px;" viewBox="0 0 16 16"><path d="M3.6 12.4 L9.4 6.6" stroke="#eceef1" stroke-width="6" stroke-linecap="round"/><path d="M9.8 6.2 L12 4" stroke="#b9bcc1" stroke-width="7" stroke-linecap="round"/></svg>
<div class="t" style="left:1117.6px;top:164.1px;height:15.4px;line-height:15.4px;font-size:11px;color:#e9ebf0;font-weight:400;">Value</div>
<div style="left:1190px;top:162px;width:117px;height:16px;background:#1a1d24;border-radius:3.2px;"></div>
<svg style="left:1293.4px;top:167px;width:7.6px;height:7.6px;" viewBox="0 0 2.9 2.9"><path d="M0.3 0.3 L2.6 2.6 M2.6 0.3 L0.3 2.6" stroke="#979aa0" stroke-width="0.36" stroke-linecap="round"/></svg>
<svg style="left:1098.8px;top:193.2px;width:11.6px;height:11.6px;" viewBox="0 0 16 16"><path d="M3.6 12.4 L9.4 6.6" stroke="#eceef1" stroke-width="6" stroke-linecap="round"/><path d="M9.8 6.2 L12 4" stroke="#b9bcc1" stroke-width="7" stroke-linecap="round"/></svg>
<div class="t" style="left:1117.6px;top:192.1px;height:15.4px;line-height:15.4px;font-size:11px;color:#e9ebf0;font-weight:400;">Placeholder</div>
<div style="left:1190px;top:190px;width:117px;height:16px;background:#1a1d24;border-radius:3.2px;"></div>
<svg style="left:1293.4px;top:195px;width:7.6px;height:7.6px;" viewBox="0 0 2.9 2.9"><path d="M0.3 0.3 L2.6 2.6 M2.6 0.3 L0.3 2.6" stroke="#979aa0" stroke-width="0.36" stroke-linecap="round"/></svg>
<svg style="left:1098.8px;top:221.2px;width:11.6px;height:11.6px;" viewBox="0 0 16 16"><path d="M3.6 12.4 L9.4 6.6" stroke="#eceef1" stroke-width="6" stroke-linecap="round"/><path d="M9.8 6.2 L12 4" stroke="#b9bcc1" stroke-width="7" stroke-linecap="round"/></svg>
<div class="t" style="left:1117.6px;top:220.1px;height:15.4px;line-height:15.4px;font-size:11px;color:#e9ebf0;font-weight:400;">Placement</div>
<div style="left:1190px;top:218px;width:117px;height:16px;background:#1a1d24;border-radius:3.2px;"></div>
<svg style="left:1290.8px;top:224.7px;width:8.8px;height:5px;" viewBox="0 0 3.6 2.1"><path d="M0.3 0.3 L1.8 1.8 L3.3 0.3" stroke="#e4e6ea" stroke-width="0.55" stroke-linecap="round" stroke-linejoin="round"/></svg>
<svg style="left:1098.8px;top:249.2px;width:11.6px;height:11.6px;" viewBox="0 0 16 16"><path d="M3.6 12.4 L9.4 6.6" stroke="#eceef1" stroke-width="6" stroke-linecap="round"/><path d="M9.8 6.2 L12 4" stroke="#b9bcc1" stroke-width="7" stroke-linecap="round"/></svg>
<div class="t" style="left:1117.6px;top:248.1px;height:15.4px;line-height:15.4px;font-size:11px;color:#e9ebf0;font-weight:400;">Size</div>
<div style="left:1190px;top:246px;width:117px;height:16px;background:#1a1d24;border-radius:3.2px;"></div>
<svg style="left:1293.4px;top:251px;width:7.6px;height:7.6px;" viewBox="0 0 2.9 2.9"><path d="M0.3 0.3 L2.6 2.6 M2.6 0.3 L0.3 2.6" stroke="#979aa0" stroke-width="0.36" stroke-linecap="round"/></svg>
<svg style="left:1098.8px;top:277.2px;width:11.6px;height:11.6px;" viewBox="0 0 16 16"><path d="M3.6 12.4 L9.4 6.6" stroke="#eceef1" stroke-width="6" stroke-linecap="round"/><path d="M9.8 6.2 L12 4" stroke="#b9bcc1" stroke-width="7" stroke-linecap="round"/></svg>
<div class="t" style="left:1117.6px;top:276.1px;height:15.4px;line-height:15.4px;font-size:11px;color:#e9ebf0;font-weight:400;">Data</div>
<div style="left:1095px;top:302px;width:213px;height:22px;background:#3c3f43;border-radius:4.4px;"></div>
<svg style="left:1197.2px;top:309px;width:8px;height:8px;" viewBox="0 0 4 4"><path d="M2 0.2 V3.8 M0.2 2 H3.8" stroke="#f1f2f4" stroke-width="0.9"/></svg>
<svg style="left:1098.8px;top:336.6px;width:11.6px;height:11.6px;" viewBox="0 0 16 16"><path d="M3.6 12.4 L9.4 6.6" stroke="#eceef1" stroke-width="6" stroke-linecap="round"/><path d="M9.8 6.2 L12 4" stroke="#b9bcc1" stroke-width="7" stroke-linecap="round"/></svg>
<div class="t" style="left:1117.6px;top:335.5px;height:15.4px;line-height:15.4px;font-size:11px;color:#e9ebf0;font-weight:400;">Cleanable</div>
<div style="left:1188px;top:335px;width:13px;height:13px;background:#34c3ff;border-radius:2.6px;"></div>
<svg style="left:1190.6px;top:338.8px;width:7.6px;height:6px;" viewBox="0 0 3.8 3"><path d="M0.4 1.5 L1.5 2.6 L3.4 0.4" stroke="#1a2430" stroke-width="0.85" stroke-linecap="round" stroke-linejoin="round"/></svg>
<svg style="left:1098.8px;top:364.7px;width:11.6px;height:11.6px;" viewBox="0 0 16 16"><path d="M3.6 12.4 L9.4 6.6" stroke="#eceef1" stroke-width="6" stroke-linecap="round"/><path d="M9.8 6.2 L12 4" stroke="#b9bcc1" stroke-width="7" stroke-linecap="round"/></svg>
<div class="t" style="left:1117.6px;top:363.6px;height:15.4px;line-height:15.4px;font-size:11px;color:#e9ebf0;font-weight:400;">Creatable</div>
<div style="left:1188px;top:364px;width:13px;height:12px;border:1.2px solid #62666c;border-radius:2.6px;"></div>
<svg style="left:1098.8px;top:392.8px;width:11.6px;height:11.6px;" viewBox="0 0 16 16"><path d="M3.6 12.4 L9.4 6.6" stroke="#eceef1" stroke-width="6" stroke-linecap="round"/><path d="M9.8 6.2 L12 4" stroke="#b9bcc1" stroke-width="7" stroke-linecap="round"/></svg>
<div class="t" style="left:1117.6px;top:391.7px;height:15.4px;line-height:15.4px;font-size:11px;color:#e9ebf0;font-weight:400;">Disabled</div>
<div style="left:1188px;top:392px;width:13px;height:12px;border:1.2px solid #62666c;border-radius:2.6px;"></div>
<svg style="left:1098.8px;top:420.9px;width:11.6px;height:11.6px;" viewBox="0 0 16 16"><path d="M3.6 12.4 L9.4 6.6" stroke="#eceef1" stroke-width="6" stroke-linecap="round"/><path d="M9.8 6.2 L12 4" stroke="#b9bcc1" stroke-width="7" stroke-linecap="round"/></svg>
<div class="t" style="left:1117.6px;top:419.8px;height:15.4px;line-height:15.4px;font-size:11px;color:#e9ebf0;font-weight:400;">Read only</div>
<div style="left:1188px;top:420px;width:13px;height:13px;border:1.2px solid #62666c;border-radius:2.6px;"></div>
<svg style="left:1098.8px;top:449.2px;width:11.6px;height:11.6px;" viewBox="0 0 16 16"><path d="M3.6 12.4 L9.4 6.6" stroke="#eceef1" stroke-width="6" stroke-linecap="round"/><path d="M9.8 6.2 L12 4" stroke="#b9bcc1" stroke-width="7" stroke-linecap="round"/></svg>
<div class="t" style="left:1117.6px;top:448.1px;height:15.4px;line-height:15.4px;font-size:11px;color:#e9ebf0;font-weight:400;">Group by</div>
<div style="left:1190px;top:447px;width:117px;height:16px;background:#1a1d24;border-radius:3.2px;"></div>
<svg style="left:1293.4px;top:451.2px;width:7.6px;height:7.6px;" viewBox="0 0 2.9 2.9"><path d="M0.3 0.3 L2.6 2.6 M2.6 0.3 L0.3 2.6" stroke="#979aa0" stroke-width="0.36" stroke-linecap="round"/></svg>
<svg style="left:1098.8px;top:477.2px;width:11.6px;height:11.6px;" viewBox="0 0 16 16"><path d="M3.6 12.4 L9.4 6.6" stroke="#eceef1" stroke-width="6" stroke-linecap="round"/><path d="M9.8 6.2 L12 4" stroke="#b9bcc1" stroke-width="7" stroke-linecap="round"/></svg>
<div class="t" style="left:1117.6px;top:476.1px;height:15.4px;line-height:15.4px;font-size:11px;color:#e9ebf0;font-weight:400;">Preload</div>
<div style="left:1188px;top:476px;width:13px;height:13px;border:1.2px solid #62666c;border-radius:2.6px;"></div>
<div class="t" style="left:1094.8px;top:591.92px;height:17.36px;line-height:17.36px;font-size:12.4px;color:#f2f3f5;font-weight:700;">Tooltip</div>
<div style="left:1165px;top:594px;width:13px;height:12px;border:1.2px solid #62666c;border-radius:2.6px;"></div>
<div class="t" style="left:1094.8px;top:613.16px;height:17.28px;line-height:17.28px;font-size:12.34px;color:#f2f3f5;font-weight:700;">Additional properties</div>
<svg style="left:1098.8px;top:638.6px;width:11.6px;height:11.6px;" viewBox="0 0 16 16"><path d="M3.6 12.4 L9.4 6.6" stroke="#eceef1" stroke-width="6" stroke-linecap="round"/><path d="M9.8 6.2 L12 4" stroke="#b9bcc1" stroke-width="7" stroke-linecap="round"/></svg>
<div class="t" style="left:1117.6px;top:629.9px;height:15.4px;line-height:15.4px;font-size:11px;color:#e9ebf0;font-weight:400;">Render</div>
<div class="t" style="left:1117.6px;top:644.7px;height:15.4px;line-height:15.4px;font-size:11px;color:#e9ebf0;font-weight:400;">When</div>
<div style="left:1190px;top:637px;width:117px;height:16px;background:#1a1d24;border-radius:3.2px;"></div>
<svg style="left:1098.8px;top:667.8px;width:11.6px;height:11.6px;" viewBox="0 0 16 16"><path d="M3.6 12.4 L9.4 6.6" stroke="#eceef1" stroke-width="6" stroke-linecap="round"/><path d="M9.8 6.2 L12 4" stroke="#b9bcc1" stroke-width="7" stroke-linecap="round"/></svg>
<div class="t" style="left:1117.6px;top:666.5px;height:15.4px;line-height:15.4px;font-size:11px;color:#e9ebf0;font-weight:400;">HTML attributes</div>
<div style="left:1095px;top:692px;width:213px;height:22px;background:#3c3f43;border-radius:4.4px;"></div>
<svg style="left:1197.2px;top:699px;width:8px;height:8px;" viewBox="0 0 4 4"><path d="M2 0.2 V3.8 M0.2 2 H3.8" stroke="#f1f2f4" stroke-width="0.9"/></svg>
</div>
<div id="txt">
<div class="t" style="left:598.60px;top:55.49px;height:6.52px;line-height:6.52px;font-size:4.66px;color:#e9ebf0;font-weight:400;">Country 1</div>
<div class="t" style="left:598.60px;top:69.49px;height:6.52px;line-height:6.52px;font-size:4.66px;color:#e9ebf0;font-weight:400;">Country / Region</div>
<div class="t" style="left:598.60px;top:97.49px;height:6.52px;line-height:6.52px;font-size:4.66px;color:#e9ebf0;font-weight:400;">United States</div>
<div class="t" style="left:597.20px;top:111.49px;height:6.52px;line-height:6.52px;font-size:4.66px;color:#8d9299;font-weight:400;">Select</div>
<div class="t" style="left:597.20px;top:125.49px;height:6.52px;line-height:6.52px;font-size:4.66px;color:#34c3ff;font-weight:400;">Medium</div>
</div></body></html>
